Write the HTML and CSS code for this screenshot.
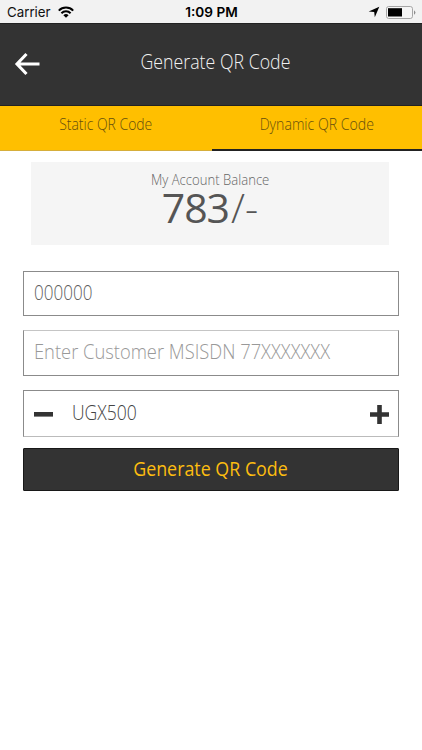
FILE: index.html
```html
<!DOCTYPE html>
<html lang="en">
<head>
<meta charset="utf-8">
<title>Generate QR Code</title>
<link rel="stylesheet" href="styles.css">
</head>
<body>
<div class="status">
  <div class="carrier"><span>Carrier</span>
    <svg width="16" height="12" viewBox="0 0 16 12" fill="none" stroke="#000" stroke-width="2"><path d="M.8 4.6a10.2 10.2 0 0 1 14.4 0M3.4 7.2a6.5 6.5 0 0 1 9.2 0"/><path d="M8 11.8 5.4 9.2a3.7 3.7 0 0 1 5.2 0z" fill="#000" stroke="none"/></svg>
  </div>
  <time>1:09 PM</time>
  <div class="power">
    <svg width="12" height="12" viewBox="0 0 12 12"><path d="M11.3.7 6.8 11.3 6.2 6 .7 5.5z"/></svg>
    <svg width="30" height="13" viewBox="0 0 30 13"><rect x=".5" y=".5" width="26" height="12" rx="2.2" fill="#f5f5f5" stroke="#a5a5a5"/><path d="M2 2.2h14v8.3H2z"/><path d="M28 4.2q2.8 2.3 0 4.6z" fill="#8d8d8d"/></svg>
  </div>
</div>
<header class="header">
  <svg class="back" width="26" height="24" viewBox="0 0 26 24" fill="none" stroke="#fff" stroke-width="3.1"><path d="M25.5 12H3M12.5 2 3 12l9.5 10"/></svg>
  <h1><span class="t-title">Generate QR Code</span></h1>
</header>
<nav class="tabs">
  <div class="tab"><span class="t-static">Static QR Code</span></div>
  <div class="tab active"><span class="t-dynamic">Dynamic QR Code</span></div>
</nav>
<main>
  <section class="balance">
    <div class="label"><span class="t-label">My Account Balance</span></div>
    <div class="amount"><span class="digits">783</span><span class="suffix">/-</span></div>
  </section>
  <div class="field code"><span class="t-code">000000</span></div>
  <div class="field phone"><span class="t-phone">Enter Customer MSISDN 77XXXXXXX</span></div>
  <div class="field stepper">
    <svg width="19" height="18" viewBox="0 0 19 18"><path d="M0 7h19v4.6H0z"/></svg>
    <span class="t-value">UGX500</span>
    <svg width="19" height="19" viewBox="0 0 19 19"><path d="M0 7.2h7.2V0h4.6v7.2H19v4.6h-7.2V19H7.2v-7.2H0z"/></svg>
  </div>
  <div class="submit"><span class="t-submit">Generate QR Code</span></div>
</main>
</body>
</html>
```
FILE: styles.css
```css
* { box-sizing: border-box; }
body { margin: 0; width: 422px; height: 750px; overflow: hidden; background: #fff; font-family: "Open Sans", "Noto Sans", sans-serif; font-weight: 300; }
svg { display: block; flex: none; }
.status { height: 23px; background: #f2f2f2; display: grid; grid-template-columns: 1fr auto 1fr; align-items: center; padding: 1px 6px 0 7px; font: 400 13.3px Inter, sans-serif; color: #111; }
.carrier { display: flex; align-items: center; gap: 7px; }
.status time { font-weight: 600; font-size: 13.6px; color: #000; }
.power { display: flex; align-items: center; justify-content: flex-end; gap: 6px; }
.header { height: 83px; background: #333; border-top: 1px solid #222; border-bottom: 1px solid #222; display: grid; grid-template-columns: 44px 1fr 35px; align-items: center; }
.back { margin: 0 0 2px 14px; }
h1 { margin: 0; padding-bottom: 6px; font-size: 20px; font-weight: 300; line-height: 28px; color: #f2f2f2; text-align: center; white-space: nowrap; }
.tabs { height: 45px; display: grid; grid-template-columns: 212px 1fr; background: #ffbf00; color: #66500e; font-size: 15.5px; line-height: 21px; text-align: center; }
.tab { padding-top: 8px; border-bottom: 1px solid #d6ae3a; }
.tab.active { padding-right: 1px; border-bottom: 2px solid #222; }
main { padding: 11px 23px 0; }
.balance { height: 83px; margin: 0 10px 26px 8px; background: #f5f5f5; text-align: center; }
.label { padding-top: 8px; font-size: 14px; line-height: 20px; color: #666; }
.amount { display: flex; justify-content: center; font-size: 41px; line-height: 35px; color: #555; }
.digits { font-weight: 400; letter-spacing: -1px; }
.suffix { font-weight: 300; margin-left: 2px; }
.field { width: 376px; display: flex; align-items: center; border: 1px solid #8b8b8b; font-size: 19.5px; color: #606060; white-space: nowrap; }
.code { height: 45px; padding: 0 10px 3px; margin-bottom: 14px; }
.phone { height: 46px; padding: 0 10px 3px; margin-bottom: 14px; border-top-color: #c5c5c5; color: #999; }
.stepper { height: 47px; padding: 1px 9px 0 10px; margin-bottom: 11px; border-bottom-color: #bbb; color: #444; }
.stepper svg { fill: #333; }
.stepper span { flex: 1; margin-left: 19px; padding-bottom: 4px; }
.submit { width: 376px; height: 43px; padding-right: 2px; background: #333; border: 1px solid #181818; border-radius: 1px; color: #fdbd10; font-size: 19.5px; font-weight: 400; line-height: 40px; text-align: center; }
h1 span, .tab span, .label span, .submit span { display: inline-block; }
.t-title { transform: scaleX(.888); }
.t-static { transform: scaleX(.9); }
.t-dynamic { transform: scaleX(.91); }
.t-label { transform: scaleX(.937); }
.field span { transform-origin: left; }
.t-code { transform: scaleX(.875); }
.t-phone { transform: scaleX(.94); }
.t-value { transform: scaleX(.9); }
.t-submit { transform: scaleX(.915); }
```
